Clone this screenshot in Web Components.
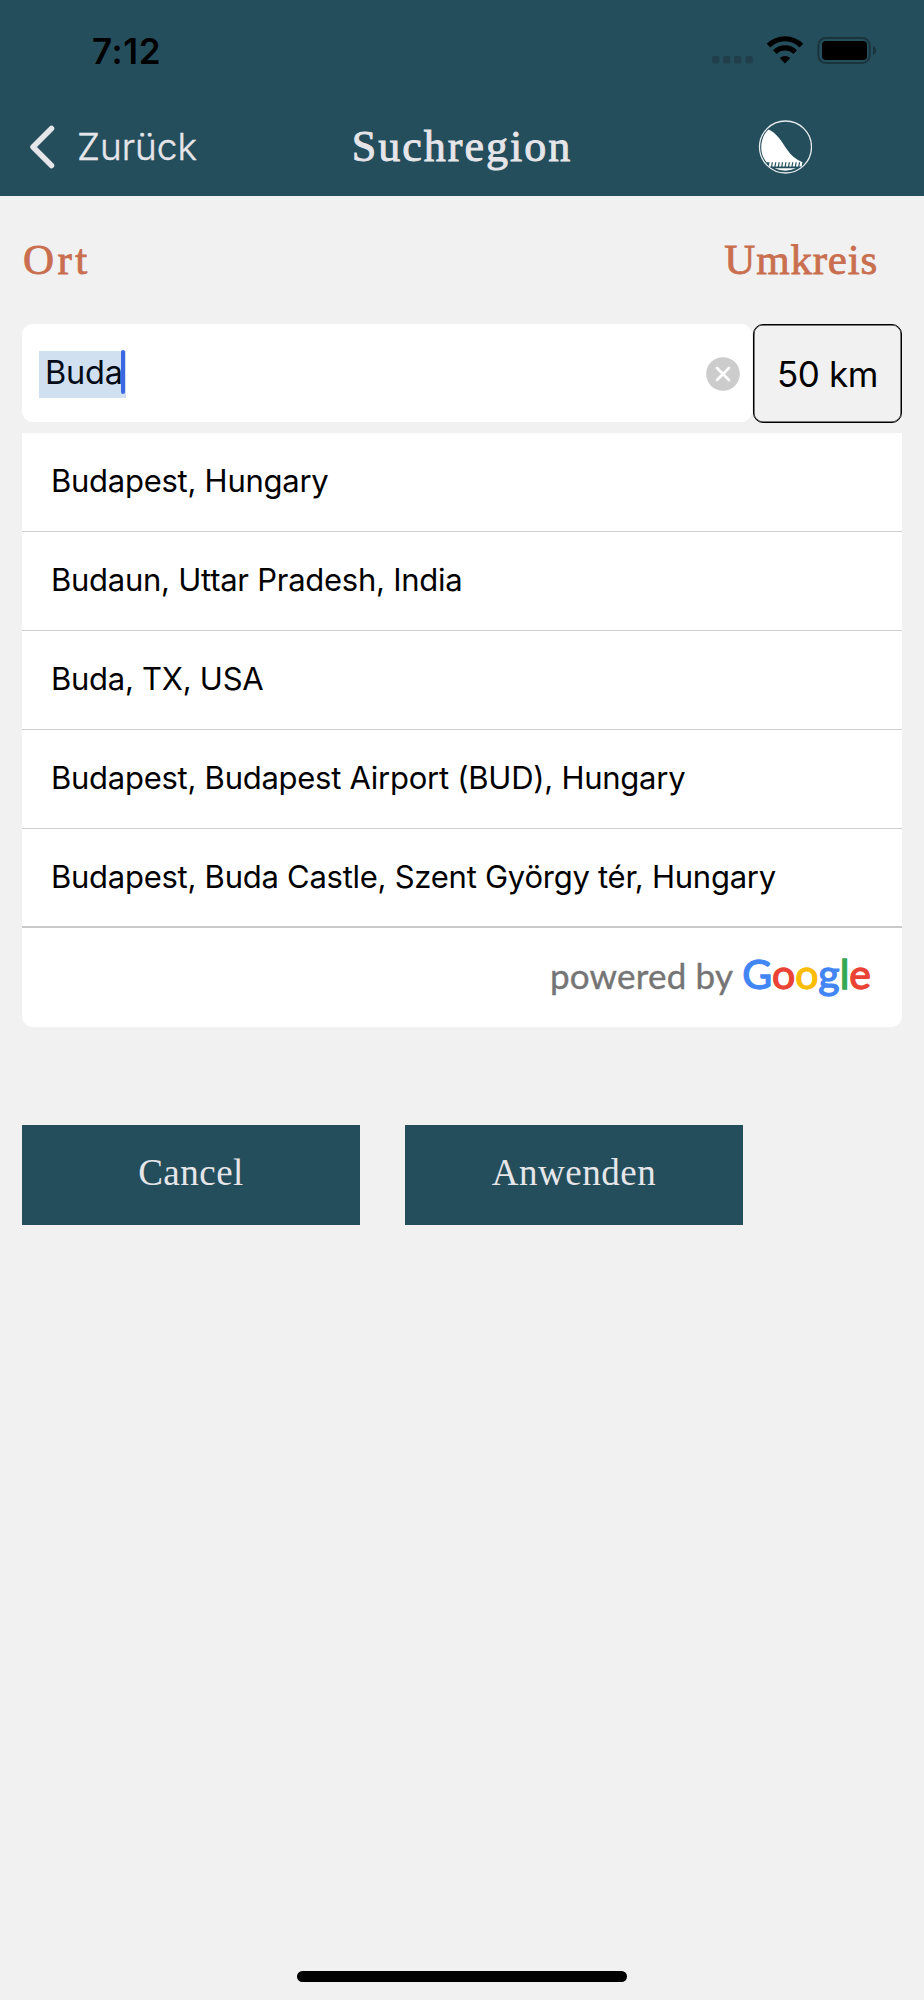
<!DOCTYPE html>
<html lang="de">
<head>
<meta charset="utf-8">
<title>Suchregion</title>
<style>
  :root {
    --color-brand: #254e5c;
    --color-accent: #c96e4f;
    --color-page: #f1f1f1;
    --color-light: #e6e6ea;
    --font-ui: Inter, "Liberation Sans", sans-serif;
    --font-display: "Liberation Serif", serif;
  }

  body {
    margin: 0;
    background: var(--color-page);
    font-family: var(--font-ui);
  }
</style>
</head>
<body>
<search-region-screen></search-region-screen>

<script>
/** Attaches an open shadow root holding the given styles and markup. */
class BaseElement extends HTMLElement {
  constructor() {
    super();
    this.attachShadow({ mode: "open" });
    this.shadowRoot.innerHTML = `<style>${this.constructor.styles}</style>${this.constructor.markup}`;
  }
}

/** Phone status bar: clock, signal, wifi and battery. */
class StatusBar extends BaseElement {
  static styles = `
    :host {
      display: flex;
      justify-content: space-between;
      height: 100px;
      box-sizing: border-box;
      padding: 30px 47px 0 92px;
      color: #000;
    }
    time {
      font-size: 35px;
      font-weight: 600;
      line-height: 42px;
      letter-spacing: 0.6px;
    }
    svg { display: block; margin-top: 4px; }
  `;
  static markup = `
    <time><slot></slot></time>
    <svg width="166" height="32" viewBox="0 0 166 32">
      <g fill="#203f4b">
        <rect x="1" y="22" width="7.4" height="7.4" rx="2"/>
        <rect x="12" y="22" width="7.4" height="7.4" rx="2"/>
        <rect x="23" y="22" width="7.4" height="7.4" rx="2"/>
        <rect x="34.4" y="22" width="7.4" height="7.4" rx="2"/>
      </g>
      <g fill="none" stroke="#000" stroke-width="5.2">
        <path d="M57.6 11.6a23 23 0 0 1 32.8 0"/>
        <path d="M63.8 18.1a14.5 14.5 0 0 1 20.4 0"/>
      </g>
      <path d="M68.7 24.1Q74 19.7 79.3 24.1L74 29.4Z"/>
      <rect x="107.3" y="4" width="51.4" height="25" rx="7.5" fill="none" stroke="#1a343e" stroke-width="2"/>
      <rect x="111" y="7" width="45" height="19" rx="4"/>
      <path d="M162 12q3 1.5 3 4.5t-3 4.5z" fill="#1a343e"/>
    </svg>
  `;
}

/** Back link, title and round logo. */
class NavBar extends BaseElement {
  static styles = `
    :host {
      display: grid;
      grid-template-columns: 308px 308px 308px;
      align-items: center;
      height: 94px;
      color: var(--color-light);
    }
    .back {
      display: flex;
      align-items: center;
      gap: 22px;
      padding-left: 29px;
      font-size: 37px;
      font-weight: 300;
      line-height: 44px;
      -webkit-text-stroke: 0.4px currentColor;
    }
    h1 {
      margin: 0;
      font: 400 44px/50px var(--font-display);
      letter-spacing: 2px;
      text-align: center;
      -webkit-text-stroke: 0.9px currentColor;
    }
    .logo { display: block; margin-left: 142px; }
    .chevron { display: block; }
  `;
  static markup = `
    <div class="back">
      <svg class="chevron" width="26" height="44" viewBox="0 0 26 44">
        <path d="M22.5 3.5L4 22L22.5 40.5" fill="none" stroke="currentColor" stroke-width="5.5" stroke-linecap="round" stroke-linejoin="round"/>
      </svg>
      <slot name="back"></slot>
    </div>
    <h1><slot></slot></h1>
    <svg class="logo" width="54" height="54" viewBox="0 0 54 54">
      <circle cx="27.5" cy="27" r="26" fill="none" stroke="#e8edef" stroke-width="1.3"/>
      <path d="M10.5 9.5C19 13 24 22 29 29.5Q35 38.5 44.5 42.2H8.500C0.5 33 2 17 10.5 9.5Z" fill="#fff"/>
      <path d="M11 44.3H44" stroke="#fff" stroke-width="4.5" stroke-dasharray="2.2 1.2" transform="translate(8 0) skewX(-10)"/>
      <path d="M16.5 48.3H38Q27 53 16.5 48.3Z" fill="#fff"/>
    </svg>
  `;
}

/** Search input with its whole value selected and a clear button. */
class PlaceInput extends BaseElement {
  static styles = `
    :host {
      display: flex;
      align-items: center;
      justify-content: space-between;
      box-sizing: border-box;
      width: 730px;
      height: 98px;
      padding: 0 12px 0 17px;
      border-radius: 11px;
      background: #fff;
    }
    .value {
      position: relative;
      box-sizing: border-box;
      width: 87px;
      height: 47px;
      margin-top: 3px;
      padding-left: 6px;
      background: #d0e0f0;
      color: #020c18;
      font-size: 32.5px;
      line-height: 44px;
      letter-spacing: -0.2px;
    }
    .caret {
      position: absolute;
      top: -1px;
      right: 1px;
      width: 4px;
      height: 44px;
      border-radius: 2px;
      background: #3b67e2;
    }
    svg { display: block; margin-top: 2px; }
  `;
  static markup = `
    <div class="value"><slot></slot><span class="caret"></span></div>
    <svg width="34" height="34" viewBox="0 0 34 34">
      <circle cx="17" cy="17" r="16.8" fill="#ccc"/>
      <path d="M11 11L23 23M23 11L11 23" stroke="#fff" stroke-width="2.7" stroke-linecap="round"/>
    </svg>
  `;
}

/** Outlined box with the chosen radius. */
class RadiusBox extends BaseElement {
  static styles = `
    :host {
      display: flex;
      align-items: center;
      justify-content: center;
      box-sizing: border-box;
      width: 149px;
      height: 99px;
      border: 1px solid #000;
      border-radius: 10px;
      box-shadow: inset 0 0 0 0.5px #000;
      color: #000;
      font-size: 35px;
      line-height: 42px;
      letter-spacing: -0.4px;
    }
  `;
  static markup = `<span><slot></slot></span>`;
}

/** One autocomplete suggestion. */
class SuggestionRow extends BaseElement {
  static styles = `
    :host {
      display: flex;
      align-items: center;
      box-sizing: border-box;
      height: 99px;
      padding: 0 0 2px 29px;
      border-bottom: 1px solid #cfcfcf;
      color: #000;
      font-size: 31px;
      line-height: 38px;
      letter-spacing: -0.26px;
      white-space: nowrap;
    }
    :host(:last-of-type) { border-bottom: 2px solid #c8c8c8; }
  `;
  static markup = `<slot></slot>`;
}

/** "powered by Google" attribution line. */
class GoogleAttribution extends BaseElement {
  static styles = `
    :host {
      display: flex;
      align-items: baseline;
      justify-content: flex-end;
      box-sizing: border-box;
      height: 99px;
      padding: 21px 31px 0 0;
      font-family: Lato, sans-serif;
      color: #757575;
      font-size: 35px;
      line-height: 50px;
      white-space: pre;
    }
    .powered { letter-spacing: 0.2px; -webkit-text-stroke: 0.4px currentColor; }
    .brand {
      font-size: 41px;
      margin-left: 9px;
      -webkit-text-stroke: 1.3px currentColor;
    }
    .blue { color: #4285f4; }
    .red { color: #ea4335; }
    .yellow { color: #fbbc05; }
    .green { color: #34a853; }
  `;
  static markup = `<span class="powered">powered by</span><span class="brand"><span class="blue">G</span><span class="red">o</span><span class="yellow">o</span><span class="blue">g</span><span class="green">l</span><span class="red">e</span></span>`;
}

/** White panel the suggestions are slotted into. */
class SuggestionList extends BaseElement {
  static styles = `
    :host {
      display: block;
      height: 594px;
      border-radius: 0 0 11px 11px;
      background: #fff;
    }
  `;
  static markup = `<slot></slot><google-attribution></google-attribution>`;
}

class ActionButton extends BaseElement {
  static styles = `
    :host { display: block; }
    button {
      display: block;
      width: 338px;
      height: 100px;
      padding: 0 0 4px;
      border: 0;
      background: var(--color-brand);
      color: var(--color-light);
      font: 37px/44px var(--font-display);
      letter-spacing: 0.5px;
    }
  `;
  static markup = `<button type="button"><slot></slot></button>`;
}

class SearchRegionScreen extends BaseElement {
  static styles = `
    :host {
      display: flex;
      flex-direction: column;
      width: 924px;
      height: 2000px;
      overflow: hidden;
    }
    header { height: 196px; background: var(--color-brand); }
    main { flex: 1; padding: 0 22px; }
    .labels {
      display: flex;
      justify-content: space-between;
      height: 128px;
      box-sizing: border-box;
      padding: 39px 24px 0 1px;
      color: var(--color-accent);
      font: 43px/50px var(--font-display);
      -webkit-text-stroke: 0.8px currentColor;
    }
    .ort { letter-spacing: 3.5px; }
    .umkreis { letter-spacing: 0.8px; }
    .fields { display: flex; gap: 1px; height: 109px; }
    .actions { display: flex; gap: 45px; margin-top: 98px; }
    footer { display: flex; justify-content: center; height: 29px; }
    .home { width: 330px; height: 11px; border-radius: 6px; background: #000; }
  `;
  static markup = `
    <header>
      <status-bar>7:12</status-bar>
      <nav-bar><span slot="back">Zurück</span>Suchregion</nav-bar>
    </header>
    <main>
      <div class="labels"><span class="ort">Ort</span><span class="umkreis">Umkreis</span></div>
      <div class="fields">
        <place-input>Buda</place-input>
        <radius-box>50 km</radius-box>
      </div>
      <suggestion-list>
        <suggestion-row>Budapest, Hungary</suggestion-row>
        <suggestion-row>Budaun, Uttar Pradesh, India</suggestion-row>
        <suggestion-row>Buda, TX, USA</suggestion-row>
        <suggestion-row>Budapest, Budapest Airport (BUD), Hungary</suggestion-row>
        <suggestion-row>Budapest, Buda Castle, Szent György tér, Hungary</suggestion-row>
      </suggestion-list>
      <div class="actions">
        <action-button>Cancel</action-button>
        <action-button>Anwenden</action-button>
      </div>
    </main>
    <footer><div class="home"></div></footer>
  `;
}

customElements.define("status-bar", StatusBar);
customElements.define("nav-bar", NavBar);
customElements.define("place-input", PlaceInput);
customElements.define("radius-box", RadiusBox);
customElements.define("suggestion-row", SuggestionRow);
customElements.define("google-attribution", GoogleAttribution);
customElements.define("suggestion-list", SuggestionList);
customElements.define("action-button", ActionButton);
customElements.define("search-region-screen", SearchRegionScreen);
</script>
</body>
</html>
